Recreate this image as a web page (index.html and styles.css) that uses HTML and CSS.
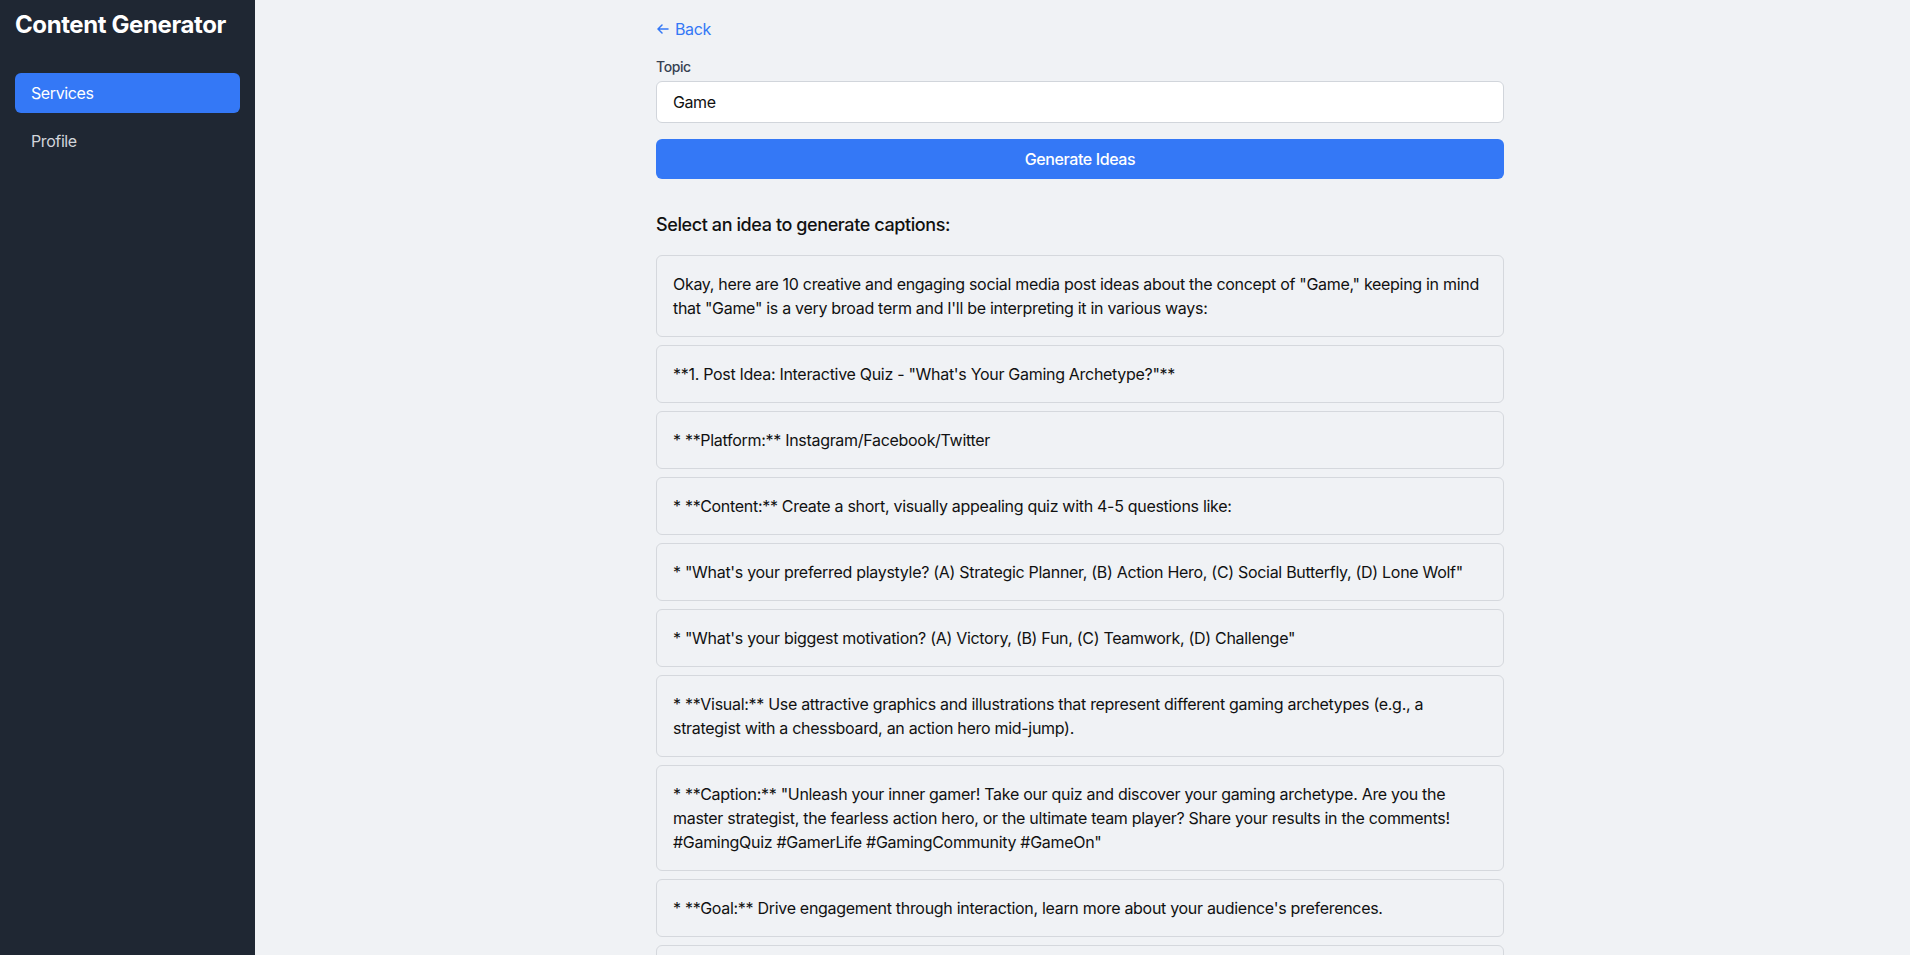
FILE: index.html
```html
<!DOCTYPE html>
<html lang="en">
<head>
<meta charset="utf-8">
<title>Content Generator</title>
<link rel="stylesheet" href="styles.css">
</head>
<body>
<div class="app">
  <aside class="sidebar">
    <h1 class="brand">Content Generator</h1>
    <nav class="nav">
      <a class="nav-item active" href="#">Services</a>
      <a class="nav-item" href="#">Profile</a>
    </nav>
  </aside>
  <main class="main">
    <div class="container">
      <a class="back" href="#"><svg class="back-icon" width="12" height="10" viewBox="0 0 12 10" fill="none" stroke="currentColor" stroke-width="1.5" stroke-linecap="round" stroke-linejoin="round"><path d="M11 5H1.5M5 1L1 5l4 4"/></svg>Back</a>
      <label class="label" for="topic">Topic</label>
      <input id="topic" class="input" type="text" value="Game">
      <button class="btn">Generate Ideas</button>
      <h2 class="heading">Select an idea to generate captions:</h2>
      <div class="ideas">
        <div class="idea">Okay, here are 10 creative and engaging social media post ideas about the concept of "Game," keeping in mind that "Game" is a very broad term and I'll be interpreting it in various ways:</div>
        <div class="idea">**1. Post Idea: Interactive Quiz - "What's Your Gaming Archetype?"**</div>
        <div class="idea">* **Platform:** Instagram/Facebook/Twitter</div>
        <div class="idea">* **Content:** Create a short, visually appealing quiz with 4-5 questions like:</div>
        <div class="idea">* "What's your preferred playstyle? (A) Strategic Planner, (B) Action Hero, (C) Social Butterfly, (D) Lone Wolf"</div>
        <div class="idea">* "What's your biggest motivation? (A) Victory, (B) Fun, (C) Teamwork, (D) Challenge"</div>
        <div class="idea">* **Visual:** Use attractive graphics and illustrations that represent different gaming archetypes (e.g., a strategist with a chessboard, an action hero mid-jump).</div>
        <div class="idea">* **Caption:** "Unleash your inner gamer! Take our quiz and discover your gaming archetype. Are you the master strategist, the fearless action hero, or the ultimate team player? Share your results in the comments! #GamingQuiz #GamerLife #GamingCommunity #GameOn"</div>
        <div class="idea">* **Goal:** Drive engagement through interaction, learn more about your audience's preferences.</div>
        <div class="idea">**2. Post Idea: Throwback Thursday - "Remember This Game?"**</div>
        <div class="idea">* **Platform:** Instagram/Facebook</div>
      </div>
    </div>
  </main>
</div>
</body>
</html>
```

FILE: styles.css
```css
* { box-sizing: border-box; }
html, body { margin: 0; padding: 0; }
body {
  font-family: Inter, "Liberation Sans", sans-serif;
  background: #f0f2f5;
  color: #111111;
  letter-spacing: -0.025em;
}
.app {
  display: flex;
  min-height: 100vh;
}
.sidebar {
  width: 255px;
  flex-shrink: 0;
  background: #1f2733;
  padding: 9px 15px 16px 15px;
  position: sticky;
  top: 0;
  height: 100vh;
}
.brand {
  margin: 0 0 32px 0;
  font-size: 24px;
  line-height: 32px;
  font-weight: 700;
  color: #ffffff;
  letter-spacing: -0.4px;
}
.nav {
  display: flex;
  flex-direction: column;
  gap: 8px;
}
.nav-item {
  display: block;
  height: 40px;
  line-height: 40px;
  padding: 0 16px;
  border-radius: 6px;
  color: #d1d5db;
  text-decoration: none;
  font-size: 16px;
}
.nav-item.active {
  background: #3478f6;
  color: #ffffff;
}
.main {
  flex: 1;
  display: flex;
  justify-content: center;
  padding: 17px 5px 0 0;
}
.container {
  width: 848px;
  display: flex;
  flex-direction: column;
}
.back {
  display: inline-flex;
  align-items: center;
  gap: 6px;
  align-self: flex-start;
  color: #3478f6;
  text-decoration: none;
  font-size: 16px;
  line-height: 24px;
  margin-bottom: 16px;
}
.back-icon { margin-left: 1px; }
.label {
  font-size: 14px;
  line-height: 20px;
  font-weight: 500;
  color: #374151;
  margin-bottom: 4px;
}
.input {
  height: 42px;
  border: 1px solid #d1d5db;
  border-radius: 6px;
  background: #ffffff;
  padding: 8px 16px;
  font-family: inherit;
  letter-spacing: inherit;
  font-size: 16px;
  line-height: 24px;
  color: #111111;
  outline: none;
  margin: 0 0 16px 0;
}
.btn {
  height: 40px;
  border: 0;
  border-radius: 6px;
  background: #3478f6;
  color: #ffffff;
  font-family: inherit;
  letter-spacing: inherit;
  font-size: 16px;
  font-weight: 500;
  line-height: 24px;
  cursor: pointer;
  margin-bottom: 32px;
}
.heading {
  margin: 0 0 16px 0;
  font-size: 18px;
  line-height: 28px;
  font-weight: 500;
  color: #111111;
}
.ideas {
  display: flex;
  flex-direction: column;
  gap: 8px;
  padding-bottom: 24px;
}
.idea {
  border: 1px solid #d5d8dd;
  border-radius: 6px;
  padding: 16px;
  font-size: 16px;
  line-height: 24px;
  letter-spacing: -0.3px;
  color: #111111;
  background: #f0f2f5;
}
```
